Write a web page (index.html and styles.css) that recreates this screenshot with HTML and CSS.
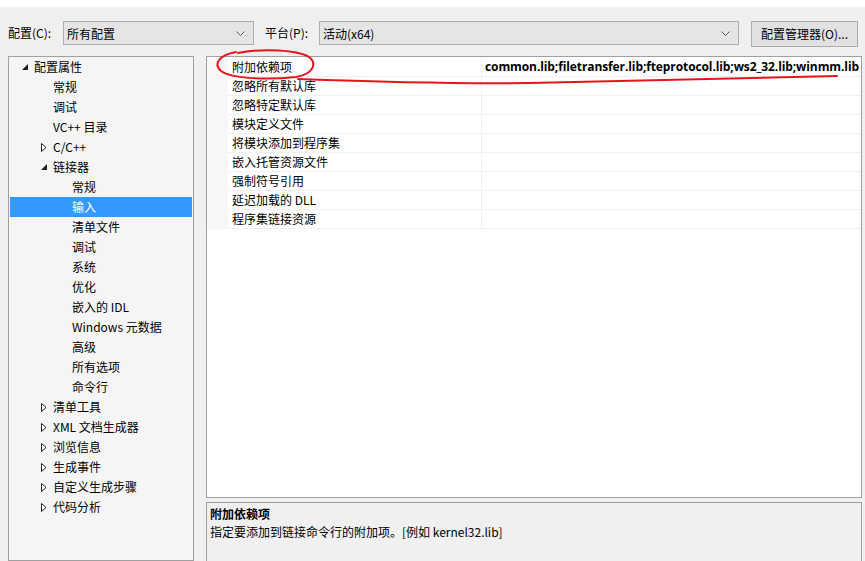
FILE: index.html
```html
<!DOCTYPE html>
<html lang="zh-CN">
<head>
    <meta charset="UTF-8">
    <title>属性页</title>
    <link rel="stylesheet" href="styles.css">
</head>
<body>
<div class="topband"></div>
<div class="toolbar">
    <span class="label label-cfg">配置(C):</span>
    <div class="combo combo-cfg">
        <span>所有配置</span>
        <svg class="chev" width="9" height="5" viewBox="0 0 9 5"><path d="M0.5 0.5 L4.5 4.5 L8.5 0.5" fill="none" stroke="#555" stroke-width="1"/></svg>
    </div>
    <span class="label label-plat">平台(P):</span>
    <div class="combo combo-plat">
        <span>活动(x64)</span>
        <svg class="chev" width="9" height="5" viewBox="0 0 9 5"><path d="M0.5 0.5 L4.5 4.5 L8.5 0.5" fill="none" stroke="#555" stroke-width="1"/></svg>
    </div>
    <div class="button">配置管理器(O)...</div>
</div>

<div class="main">
    <div class="tree">
        <div class="node lv0"><span class="tog"><svg width="6" height="6" viewBox="0 0 6 6"><polygon points="6,0 6,6 0,6" fill="#1e1e1e"/></svg></span>配置属性</div>
        <div class="node lv1"><span class="tog"></span>常规</div>
        <div class="node lv1"><span class="tog"></span>调试</div>
        <div class="node lv1"><span class="tog"></span>VC++ 目录</div>
        <div class="node lv1"><span class="tog"><svg width="6" height="9" viewBox="0 0 6 9"><polygon points="0.5,0.5 5,4.5 0.5,8.5" fill="#fff" stroke="#1e1e1e" stroke-width="1"/></svg></span>C/C++</div>
        <div class="node lv1"><span class="tog"><svg width="6" height="6" viewBox="0 0 6 6"><polygon points="6,0 6,6 0,6" fill="#1e1e1e"/></svg></span>链接器</div>
        <div class="node lv2"><span class="tog"></span>常规</div>
        <div class="node lv2 selected"><span class="tog"></span>输入</div>
        <div class="node lv2"><span class="tog"></span>清单文件</div>
        <div class="node lv2"><span class="tog"></span>调试</div>
        <div class="node lv2"><span class="tog"></span>系统</div>
        <div class="node lv2"><span class="tog"></span>优化</div>
        <div class="node lv2"><span class="tog"></span>嵌入的 IDL</div>
        <div class="node lv2"><span class="tog"></span>Windows 元数据</div>
        <div class="node lv2"><span class="tog"></span>高级</div>
        <div class="node lv2"><span class="tog"></span>所有选项</div>
        <div class="node lv2"><span class="tog"></span>命令行</div>
        <div class="node lv1"><span class="tog"><svg width="6" height="9" viewBox="0 0 6 9"><polygon points="0.5,0.5 5,4.5 0.5,8.5" fill="#fff" stroke="#1e1e1e" stroke-width="1"/></svg></span>清单工具</div>
        <div class="node lv1"><span class="tog"><svg width="6" height="9" viewBox="0 0 6 9"><polygon points="0.5,0.5 5,4.5 0.5,8.5" fill="#fff" stroke="#1e1e1e" stroke-width="1"/></svg></span>XML 文档生成器</div>
        <div class="node lv1"><span class="tog"><svg width="6" height="9" viewBox="0 0 6 9"><polygon points="0.5,0.5 5,4.5 0.5,8.5" fill="#fff" stroke="#1e1e1e" stroke-width="1"/></svg></span>浏览信息</div>
        <div class="node lv1"><span class="tog"><svg width="6" height="9" viewBox="0 0 6 9"><polygon points="0.5,0.5 5,4.5 0.5,8.5" fill="#fff" stroke="#1e1e1e" stroke-width="1"/></svg></span>生成事件</div>
        <div class="node lv1"><span class="tog"><svg width="6" height="9" viewBox="0 0 6 9"><polygon points="0.5,0.5 5,4.5 0.5,8.5" fill="#fff" stroke="#1e1e1e" stroke-width="1"/></svg></span>自定义生成步骤</div>
        <div class="node lv1"><span class="tog"><svg width="6" height="9" viewBox="0 0 6 9"><polygon points="0.5,0.5 5,4.5 0.5,8.5" fill="#fff" stroke="#1e1e1e" stroke-width="1"/></svg></span>代码分析</div>
    </div>

    <div class="right">
        <div class="grid">
            <div class="row"><div class="gutter"></div><div class="name">附加依赖项</div><div class="value">common.lib;filetransfer.lib;fteprotocol.lib;ws2_32.lib;winmm.lib</div></div>
            <div class="row"><div class="gutter"></div><div class="name">忽略所有默认库</div><div class="value"></div></div>
            <div class="row"><div class="gutter"></div><div class="name">忽略特定默认库</div><div class="value"></div></div>
            <div class="row"><div class="gutter"></div><div class="name">模块定义文件</div><div class="value"></div></div>
            <div class="row"><div class="gutter"></div><div class="name">将模块添加到程序集</div><div class="value"></div></div>
            <div class="row"><div class="gutter"></div><div class="name">嵌入托管资源文件</div><div class="value"></div></div>
            <div class="row"><div class="gutter"></div><div class="name">强制符号引用</div><div class="value"></div></div>
            <div class="row"><div class="gutter"></div><div class="name">延迟加载的 DLL</div><div class="value"></div></div>
            <div class="row"><div class="gutter"></div><div class="name">程序集链接资源</div><div class="value"></div></div>
        </div>
        <div class="desc">
            <div class="desc-title">附加依赖项</div>
            <div class="desc-text">指定要添加到链接命令行的附加项。[例如 kernel32.lib]</div>
        </div>
    </div>
</div>

<!-- red pen marks drawn over the screenshot -->
<svg class="marks" width="865" height="561" viewBox="0 0 865 561">
    <path d="M238 53 C262 48 298 50 309 57 C317 63 314 74 296 77 C268 80 232 79 221 71 C213 64 219 55 236 52" fill="none" stroke="#e8141c" stroke-width="2" stroke-linecap="round"/>
    <path d="M298 79 C380 82 450 84 530 83 C620 81 720 78 837 76" fill="none" stroke="#e8141c" stroke-width="2" stroke-linecap="round"/>
</svg>
</body>
</html>
```

FILE: styles.css
```css
body {
    margin: 0;
    width: 865px;
    height: 561px;
    overflow: hidden;
    background: #f0f0f0;
    font-family: "Noto Sans CJK SC", "Noto Sans", sans-serif;
    font-size: 12px;
    color: #000;
    position: relative;
}

.topband {
    height: 7px;
    background: #ffffff;
}

.toolbar {
    display: flex;
    align-items: flex-start;
    padding: 14px 0 0 8px;
    height: 35px;
}

.label {
    line-height: 24px;
    white-space: nowrap;
}

.label-cfg {
    width: 55px;
}

.label-plat {
    width: 54px;
    margin-left: 11px;
}

.combo {
    height: 22px;
    border: 1px solid #adadad;
    background: #e5e5e5;
    display: flex;
    align-items: center;
    justify-content: space-between;
    padding: 0 8px 0 3px;
}

.combo-cfg {
    width: 178px;
}

.combo-plat {
    width: 407px;
}

.chev {
    display: block;
}

.button {
    margin-left: 12px;
    width: 105px;
    height: 24px;
    border: 1px solid #adadad;
    background: #e1e1e1;
    text-align: center;
    line-height: 24px;
}

.main {
    display: flex;
    padding-left: 8px;
}

.tree {
    width: 184px;
    height: 503px;
    border: 1px solid #a0a0a0;
    background: #f5f5f5;
}

.node {
    box-sizing: border-box;
    width: 182px;
    margin-left: 1px;
    height: 20px;
    line-height: 20px;
    display: flex;
    align-items: center;
    white-space: nowrap;
}

.tog {
    width: 18px;
    height: 20px;
    display: flex;
    align-items: center;
    justify-content: center;
    flex-shrink: 0;
}

.tog svg {
    display: block;
}

.lv0 {
    padding-left: 6px;
}

.lv1 {
    padding-left: 25px;
}

.lv2 {
    padding-left: 44px;
}

.node.selected {
    background: #3399ff;
    color: #ffffff;
}

.right {
    margin-left: 12px;
    width: 656px;
    display: flex;
    flex-direction: column;
}

.grid {
    height: 439px;
    padding-top: 1px;
    border: 1px solid #a0a0a0;
    background: #ffffff;
    overflow: hidden;
}

.row {
    display: flex;
    height: 19px;
}

.gutter {
    width: 21px;
    background: #f7f7f7;
    flex-shrink: 0;
}

.name {
    width: 249px;
    padding-left: 4px;
    flex-shrink: 0;
    line-height: 18px;
    border-bottom: 1px solid #f0f0f0;
    border-right: 1px solid #f0f0f0;
    white-space: nowrap;
}

.value {
    flex: 1;
    padding-left: 3px;
    line-height: 18px;
    border-bottom: 1px solid #f0f0f0;
    font-family: "Open Sans", "Noto Sans", sans-serif;
    font-weight: bold;
    font-size: 12px;
    letter-spacing: -0.1px;
    white-space: nowrap;
    overflow: hidden;
}

.desc {
    margin-top: 4px;
    height: 57px;
    border: 1px solid #a0a0a0;
    background: #f0f0f0;
    padding: 2px 3px 0 3px;
}

.desc-title {
    font-weight: bold;
    line-height: 18px;
}

.desc-text {
    line-height: 18px;
}

.marks {
    position: absolute;
    left: 0;
    top: 0;
    pointer-events: none;
}
```
